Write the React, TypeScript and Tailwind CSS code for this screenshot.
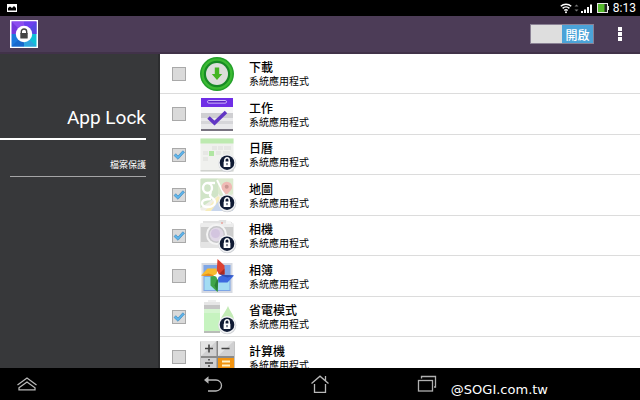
import { useState, type ReactNode } from "react";

type AppItem = { name: string; locked: boolean; icon: ReactNode };

const DownloadIcon = (
  <>
    <circle cx="17" cy="17" r="17" fill="#23a02a" />
    <circle cx="17" cy="17" r="15.500" fill="#3cba33" />
    <circle cx="17" cy="17" r="13.200" fill="#178a25" />
    <circle cx="17" cy="17" r="11" fill="#dcdedb" />
    <path d="M14.800 10.500h4.400V17h3L17 23l-5.200-6h3z" fill="#43b522" />
  </>
);

const TaskIcon = (
  <>
    <rect x="1" y="1" width="32" height="33" fill="#e9e9eb" />
    <rect x="1" y="1" width="32" height="9" fill="#6f2ee6" />
    <rect x="7.500" y="3.500" width="19" height="2.600" rx="1.300" fill="#5a22c4" stroke="#d9c8ff" strokeWidth=".9" />
    <rect x="1" y="10" width="32" height="6" fill="#f6f6f7" />
    <rect x="1" y="16" width="32" height="5" fill="#cfcfd2" />
    <rect x="1" y="24" width="32" height="3" fill="#d6d6d9" />
    <rect x="1" y="32" width="32" height="2" fill="#77737f" />
    <path d="M8.500 20.500l6 5.500L26 15" fill="none" stroke="#6237c4" strokeWidth="3.600" />
  </>
);

const CalendarIcon = (
  <>
    <rect x=".5" y=".5" width="33" height="33" rx="1" fill="#f0f1ee" />
    <path d="M.5.5h33v5H.5z" fill="#bdeab0" />
    <path d="M12 8h5v4h-5zM18 8h5v4h-5zM24 8h7v4h-7zM3 13h5v4H3zM16 13h5v4h-5zM23 13h7v4h-7zM3 19h5v4H3z" fill="#e6e7e4" />
    <rect x="9" y="13" width="5" height="5" fill="#b0e6a2" />
    <path d="M.5 32h33v1.500H.5z" fill="#d0d2ce" />
  </>
);

const MapIcon = (
  <>
    <rect x=".5" y=".5" width="33" height="32" rx="1" fill="#efeee8" />
    <path d="M.5 1.500a1 1 0 0 1 1-1H18v17L.5 30z" fill="#d0e4c7" />
    <path d="M18 .5h15v15l-8 7-7-7z" fill="#dceacf" />
    <path d="M5 33l13-15 3 3-10 12z" fill="#f7edbb" />
    <path d="M11 33l9-12 13 8v4z" fill="#c8d6ec" />
    <path d="M17 2l10 20" stroke="#fff" strokeWidth="1.800" />
    <g fill="none" stroke="#fff" strokeWidth="2.400">
      <ellipse cx="7.500" cy="10" rx="4.500" ry="5" />
      <path d="M8 5h7" />
      <path d="M11 14c-1 2-2 3 0 5 3 2 4 3 4 5 0 3-3 5-7 5s-6-1-6-4 4-4 9-4" />
    </g>
    <path d="M26.500 18c-1-4-5-5-5-9a5.300 5.300 0 0 1 10.600 0c0 4-4.600 5-5.600 9z" fill="#efbab5" />
    <circle cx="26.700" cy="8.800" r="2" fill="#c99691" />
  </>
);

const CameraIcon = (
  <>
    <path d="M3 5V2h15l2-1h6l1 2h5v3z" fill="#e2e2e2" />
    <rect x=".5" y="5" width="33" height="23" rx="1" fill="#cdcdcd" />
    <rect x=".5" y="4" width="33" height="4" fill="#ececec" />
    <rect x=".5" y="23" width="33" height="6" fill="#e4e4e4" />
    <circle cx="22" cy="4" r="1" fill="#e9a39d" />
    <rect x="26" y="2" width="5" height="3" fill="#f6f6f6" />
    <circle cx="16.500" cy="15.500" r="10.500" fill="#f4f4f4" />
    <circle cx="16.500" cy="15.500" r="8.500" fill="#c6c6c9" />
    <circle cx="16.500" cy="15.500" r="7" fill="#e0d8e6" />
    <circle cx="15.500" cy="14.500" r="4.500" fill="#d3c5df" />
  </>
);

const GalleryIcon = (
  <>
    <rect x="1.500" y="4" width="31" height="30" fill="#d5d9e2" />
    <rect x="3.500" y="6" width="27" height="26" fill="#7ea6e6" />
    <path d="M4.500 18h25v13h-25z" fill="#a3dcf3" />
    <g transform="translate(17.500 16.500)">
      <path d="M0-16.500L-1 0 7-1V-10z" fill="#dc4130" />
      <path d="M0 0l7-1V-7z" fill="#a92a20" />
    </g>
    <g transform="translate(17.500 16.500) rotate(-90)">
      <path d="M0-16.500L-1 0 7-1V-10z" fill="#f9bb2d" />
      <path d="M-1 0L0-16.500 2-9z" fill="#e58a1c" />
    </g>
    <g transform="translate(17.500 16.500) rotate(180)">
      <path d="M0-16.500L-1 0 7-1V-10z" fill="#3fa549" />
      <path d="M-1 0L0-16.500 3-10z" fill="#2b8237" />
    </g>
    <g transform="translate(17.500 16.500) rotate(90)">
      <path d="M0-16.500L-1 0 7-1V-10z" fill="#3d69df" />
      <path d="M-1 0L0-16.500 2-10z" fill="#2c4fb6" />
    </g>
    <path d="M17.500 12l1.200 3.300 3.300 1.200-3.300 1.200-1.200 3.300-1.200-3.300-3.300-1.200 3.300-1.200z" fill="#fff" />
  </>
);

const PowerIcon = (
  <>
    <rect x="8" y="0" width="8" height="3" fill="#efefef" />
    <rect x="4" y="2" width="16" height="31" rx="1" fill="#c6f3bf" />
    <path d="M4 2h16v3H4z" fill="#e6e6e6" />
    <path d="M4 5h16v4H4z" fill="#c5c5c5" />
    <path d="M4 9h16v4H4z" fill="#d6f5d1" />
    <path d="M4 31h16v2H4z" fill="#b9bdb8" />
    <path d="M28 6c3 7 6 9 6 14s-3 8-6.500 8-6.500-4-6.500-8 4-7 7-14z" fill="#c3ebb6" />
  </>
);

const CalculatorIcon = (
  <>
    <rect x=".5" y="1" width="34" height="35" rx="1" fill="#8a8a8a" />
    <path d="M1 1h15.500v15H1zM18 1h16v15H18zM1 18h15.500v16H1z" fill="#d0d0d1" />
    <path d="M1 1h15.500L1 16zM18 1h16L18 16z" fill="#e4e4e4" />
    <path d="M18 18h16v16H18z" fill="#f29411" />
    <path d="M9 4.500v8M5 8.500h8M21.500 8.500h8M5 23h8M9 19v1.500M9 25v2" stroke="#444" strokeWidth="1.600" />
    <path d="M22 21.500h8M22 25.500h8" stroke="#fff3c9" strokeWidth="2" />
  </>
);

const LockBadge = (
  <>
    <circle cx="27.300" cy="25.300" r="9" fill="#cfd2d6" />
    <circle cx="27" cy="24.700" r="8.700" fill="#f1f2f4" />
    <circle cx="27" cy="24.700" r="7.300" fill="#101b34" />
    <path d="M24.800 24v-2a2.200 2.200 0 0 1 4.400 0v2" fill="none" stroke="#fff" strokeWidth="1.500" />
    <rect x="23.600" y="23.500" width="6.800" height="5.500" rx=".5" fill="#fff" />
    <rect x="26.500" y="25" width="1" height="2.200" fill="#101b34" />
  </>
);

const apps: AppItem[] = [
  { name: "下載", locked: false, icon: DownloadIcon },
  { name: "工作", locked: false, icon: TaskIcon },
  { name: "日曆", locked: true, icon: CalendarIcon },
  { name: "地圖", locked: true, icon: MapIcon },
  { name: "相機", locked: true, icon: CameraIcon },
  { name: "相簿", locked: false, icon: GalleryIcon },
  { name: "省電模式", locked: true, icon: PowerIcon },
  { name: "計算機", locked: false, icon: CalculatorIcon },
];

function StatusBar() {
  return (
    <div className="flex h-4 shrink-0 items-center justify-between bg-black pr-1 pl-[7px] text-white">
      <svg width="10" height="8" viewBox="0 0 10 8">
        <rect width="10" height="8" fill="#fff" />
        <path d="M1 6.500V4l2-1.500L5 4l2-2 2 2v2.500z" fill="#000" />
      </svg>
      <div className="flex items-center gap-1">
        <svg width="50" height="12" viewBox="0 0 50 12">
          <g fill="none" stroke="#fff" strokeWidth="1.500">
            <path d="M1.800 4.200a7.600 7.600 0 0 1 10.400 0M3.600 6.400a5 5 0 0 1 6.800 0M5.300 8.500a2.500 2.500 0 0 1 3.400 0" />
          </g>
          <circle cx="7" cy="10.300" r="1" fill="#fff" />
          <path d="M15.500 4.500l2-2 2 2zM15.500 7.500l2 2 2-2z" fill="#777" />
          <path d="M22 9h2v2h-2zM25 7.500h2V11h-2zM28 5h2v6h-2zM31 2.500h2V11h-2z" fill="#fff" />
          <rect x="38.500" y="1.500" width="10" height="9" fill="#55b92c" stroke="#e6e6e6" />
          <path d="M45.500 2H48v8h-2.500z" fill="#222" />
          <path d="M49 4h1v4h-1z" fill="#e6e6e6" />
        </svg>
        <span className="text-xs leading-4">8:13</span>
      </div>
    </div>
  );
}

function Header() {
  const [enabled, setEnabled] = useState(true);

  return (
    <header className="flex h-[38px] shrink-0 items-center justify-between border-b-2 border-[#413249] bg-[#4c3c57] pr-3 pl-[9px]">
      <svg width="30" height="30" viewBox="0 0 30 30">
        <rect x="1" y="1" width="28" height="28" fill="#fff" />
        <path d="M2.500 2.500h25V15h-25z" fill="#7438dc" />
        <path d="M2.500 2.500L15 15V2.500z" fill="#8b4df0" />
        <path d="M15 2.500h12.500L15 15z" fill="#6b3ff0" />
        <path d="M27.500 2.500V15H15z" fill="#5648e2" />
        <path d="M2.500 15H15v12.500H2.500z" fill="#1a79de" />
        <path d="M2.500 27.500L15 15v12.500z" fill="#1668cc" />
        <path d="M15 15h12.500v12.500H15z" fill="#10c0d8" />
        <path d="M15 15l12.500 12.500H15z" fill="#2ea3de" />
        <circle cx="15" cy="15" r="8.200" fill="#fff" />
        <path d="M12.300 15v-2.300a2.700 2.700 0 0 1 5.400 0V15" fill="none" stroke="#444" strokeWidth="1.400" />
        <rect x="11.300" y="14" width="7.400" height="5.500" rx=".5" fill="#444" />
      </svg>
      <div className="flex items-center gap-[18px]">
        <button
          type="button"
          role="switch"
          aria-checked={enabled}
          onClick={() => setEnabled(!enabled)}
          className="grid h-5 w-16 grid-cols-2 border border-[#8a8194] bg-[#dedede]"
        >
          <span className={`flex items-center justify-center pt-1 text-xs leading-[14px] font-medium text-white ${enabled ? "col-start-2 bg-[#4ba3d8]" : "col-start-1 bg-gray-500"}`}>
            {enabled ? "開啟" : "關閉"}
          </span>
        </button>
        <button type="button" aria-label="更多" className="flex w-4 flex-col items-center gap-px">
          <span className="size-1 bg-white" />
          <span className="size-1 bg-white" />
          <span className="size-1 bg-white" />
        </button>
      </div>
    </header>
  );
}

function Sidebar() {
  return (
    <nav className="flex w-1/4 flex-col border-r-2 border-[#2c2d2f] bg-[#37383a] pt-[50px] pr-3 text-right text-white">
      <a href="#lock" className="border-b-2 border-white pb-[6px] text-[19px] leading-7">App Lock</a>
      <a href="#files" className="ml-[10px] border-b border-[#a5a5a6] pt-[18px] pb-1 text-[9px] leading-[14px]">檔案保護</a>
    </nav>
  );
}

function AppRow({ app, onToggle }: { app: AppItem; onToggle: () => void }) {
  return (
    <li className="border-b border-[#dcdcdc] odd:h-10 even:h-[41px]">
      <label className="flex h-full items-center pl-3">
        <span className="relative mr-[14px] size-[14px]">
          <input
            type="checkbox"
            checked={app.locked}
            onChange={onToggle}
            className="block size-[14px] appearance-none border border-[#a9a9a9] bg-[#dadada]"
          />
          {app.locked && (
            <svg className="pointer-events-none absolute inset-0" width="14" height="14" viewBox="0 0 14 14">
              <path d="M2 7.500l1.800-1.800L6 8l4.800-5.200 1.700 1.400L6 11.300z" fill="#5db4ea" stroke="#3583bb" strokeWidth=".6" />
            </svg>
          )}
        </span>
        <svg className="mr-[13px] shrink-0 overflow-visible" width="36" height="34" viewBox="0 0 36 34">
          {app.icon}
          {app.locked && LockBadge}
        </svg>
        <span className="flex flex-col pt-[3px] text-black">
          <span className="text-xs leading-[14px] font-medium">{app.name}</span>
          <span className="text-[10px] leading-[14px]">系統應用程式</span>
        </span>
      </label>
    </li>
  );
}

function NavBar() {
  return (
    <footer className="relative grid h-8 shrink-0 grid-cols-[1fr_2fr_1fr] items-center bg-black">
      <button type="button" aria-label="展開" className="ml-4 w-5">
        <svg width="22" height="16" viewBox="0 0 22 16" fill="none" stroke="#b8b8b8" strokeWidth="1.300">
          <path d="M1.500 9L11 2l9.500 7M3 11.800L11 6l8 5.800v2H3z" />
        </svg>
      </button>
      <div className="grid grid-cols-3 justify-items-center">
        <button type="button" aria-label="返回">
          <svg width="20" height="18" viewBox="0 0 20 18" fill="none" stroke="#b8b8b8" strokeWidth="1.300">
            <path d="M4 5h9a5.500 5.500 0 0 1 0 11H5" />
            <path d="M1 5l4.500-3.800v7.600z" fill="#b8b8b8" stroke="none" />
          </svg>
        </button>
        <button type="button" aria-label="首頁">
          <svg width="20" height="20" viewBox="0 0 20 20" fill="none" stroke="#b8b8b8" strokeWidth="1.300">
            <path d="M1.500 9.500L10 2.200l8.500 7.300M15.500 6.500V2M4.500 10v8.300h11V10" />
          </svg>
        </button>
        <button type="button" aria-label="最近使用">
          <svg width="20" height="18" viewBox="0 0 20 18" fill="none" stroke="#b0b0b0" strokeWidth="1.300">
            <rect x="1.500" y="5.500" width="14" height="10.500" />
            <path d="M4.500 3.500v-2h14V12h-1.500" />
          </svg>
        </button>
      </div>
      <span className="absolute right-[92px] bottom-[2px] font-['DejaVu_Sans',sans-serif] text-[13px] leading-4 text-white">@SOGI.com.tw</span>
    </footer>
  );
}

export default function App() {
  const [items, setItems] = useState(apps);

  const toggle = (name: string) =>
    setItems(items.map((a) => (a.name === name ? { ...a, locked: !a.locked } : a)));

  return (
    <div className="flex h-screen flex-col overflow-hidden bg-black font-[Roboto,'Noto_Sans_CJK_TC',sans-serif]">
      <StatusBar />
      <Header />
      <main className="flex min-h-0 flex-1 overflow-hidden bg-white">
        <Sidebar />
        <ul className="flex-1">
          {items.map((app) => (
            <AppRow key={app.name} app={app} onToggle={() => toggle(app.name)} />
          ))}
        </ul>
      </main>
      <NavBar />
    </div>
  );
}
